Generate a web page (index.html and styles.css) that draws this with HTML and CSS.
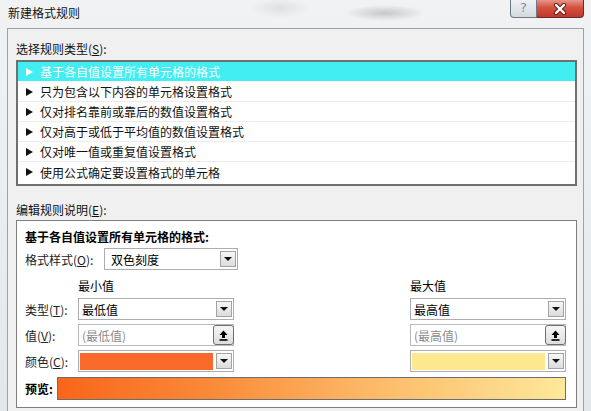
FILE: index.html
```html
<!DOCTYPE html>
<html lang="zh-CN">
  <head>
    <meta charset="UTF-8" />
    <title>新建格式规则</title>
    <link rel="stylesheet" href="styles.css">
  </head>
  <body>
    <div class="window">
      <div class="titlebar">
        <span class="title">新建格式规则</span>
        <div class="caption">
          <div class="btn-help">?</div>
          <div class="btn-close">
            <svg width="14" height="12" viewBox="0 0 14 12">
              <path d="M3 2 L11 10 M11 2 L3 10" stroke="#6b1f16" stroke-width="4.4" stroke-linecap="round" />
              <path d="M3 2 L11 10 M11 2 L3 10" stroke="#ffffff" stroke-width="2.4" stroke-linecap="round" />
            </svg>
          </div>
        </div>
      </div>

      <div class="dialog">
        <div class="section-label">选择规则类型(<u>S</u>):</div>
        <ul class="rule-list">
          <li class="selected"><span class="tri"></span>基于各自值设置所有单元格的格式</li>
          <li><span class="tri"></span>只为包含以下内容的单元格设置格式</li>
          <li><span class="tri"></span>仅对排名靠前或靠后的数值设置格式</li>
          <li><span class="tri"></span>仅对高于或低于平均值的数值设置格式</li>
          <li><span class="tri"></span>仅对唯一值或重复值设置格式</li>
          <li><span class="tri"></span>使用公式确定要设置格式的单元格</li>
        </ul>

        <div class="section-label second">编辑规则说明(<u>E</u>):</div>
        <div class="desc">
          <div class="desc-title">基于各自值设置所有单元格的格式:</div>

          <div class="style-row">
            <span class="style-label">格式样式(<u>O</u>):</span>
            <div class="combo style-combo">
              <span>双色刻度</span>
              <span class="drop-btn"></span>
            </div>
          </div>

          <div class="scale">
            <span class="col-head col-min">最小值</span>
            <span class="col-head col-max">最大值</span>

            <span class="row-label">类型(<u>T</u>):</span>
            <div class="combo col-min">
              <span>最低值</span>
              <span class="drop-btn"></span>
            </div>
            <div class="combo col-max">
              <span>最高值</span>
              <span class="drop-btn"></span>
            </div>

            <span class="row-label">值(<u>V</u>):</span>
            <div class="ref-input col-min">
              <span>(最低值)</span>
              <span class="ref-btn">
                <svg width="9" height="11" viewBox="0 0 9 11">
                  <path d="M4.5 0.5 L8.5 5 L6 5 L6 8 L3 8 L3 5 L0.5 5 Z" fill="#000" />
                  <rect x="0.5" y="9.2" width="8" height="1.6" fill="#000" />
                </svg>
              </span>
            </div>
            <div class="ref-input col-max">
              <span>(最高值)</span>
              <span class="ref-btn">
                <svg width="9" height="11" viewBox="0 0 9 11">
                  <path d="M4.5 0.5 L8.5 5 L6 5 L6 8 L3 8 L3 5 L0.5 5 Z" fill="#000" />
                  <rect x="0.5" y="9.2" width="8" height="1.6" fill="#000" />
                </svg>
              </span>
            </div>

            <span class="row-label">颜色(<u>C</u>):</span>
            <div class="color-combo col-min">
              <span class="swatch swatch-min"></span>
              <span class="drop-btn"></span>
            </div>
            <div class="color-combo col-max">
              <span class="swatch swatch-max"></span>
              <span class="drop-btn"></span>
            </div>
          </div>

          <div class="preview-row">
            <span class="preview-label">预览:</span>
            <div class="preview-bar"></div>
          </div>
        </div>
      </div>
    </div>
  </body>
</html>
```

FILE: styles.css
```css
* {
  margin: 0;
  padding: 0;
  box-sizing: border-box;
}

body {
  width: 591px;
  height: 411px;
  overflow: hidden;
  font-family: "Noto Sans CJK SC", "Microsoft YaHei", sans-serif;
  font-size: 12px;
  color: #000;
}

u {
  text-decoration: underline;
  text-underline-offset: 1px;
}

.window {
  height: 411px;
  display: flex;
  flex-direction: column;
  padding: 0 7px;
  background:
    radial-gradient(ellipse 40px 8px at 385px 13px, rgba(120, 120, 120, 0.35), transparent),
    radial-gradient(ellipse 30px 10px at 280px 8px, rgba(150, 150, 150, 0.2), transparent),
    linear-gradient(to bottom, #f1f2f3, #e4e7ea);
}

.titlebar {
  height: 28px;
  flex-shrink: 0;
  display: flex;
  align-items: flex-start;
}

.title {
  margin: 5px 0 0 1px;
  line-height: 16px;
  color: #111;
}

.caption {
  margin-left: auto;
  display: flex;
}

.btn-help {
  width: 27px;
  height: 18px;
  border: 1px solid #6d7885;
  border-top: none;
  border-bottom-left-radius: 4px;
  background: linear-gradient(to bottom, #eef1f4, #d3d9df);
  color: #7a8694;
  font-family: "DejaVu Sans", sans-serif;
  font-size: 13px;
  line-height: 16px;
  text-align: center;
  text-shadow: 0 0 1px #fff;
}

.btn-close {
  width: 47px;
  height: 18px;
  border: 1px solid #6a2a22;
  border-top: none;
  border-left: none;
  border-bottom-right-radius: 4px;
  background: linear-gradient(to bottom, #e8948a 0%, #d4513f 45%, #c2352a 100%);
  display: flex;
  align-items: center;
  justify-content: center;
}

.dialog {
  flex: 1;
  background: #f0f0f0;
  border: 1px solid #9aa3ac;
  border-bottom: none;
  padding: 12px 6px 0 8px;
}

.section-label {
  line-height: 16px;
  color: #111;
}

.section-label.second {
  margin-top: 16px;
}

.rule-list {
  list-style: none;
  margin-top: 3px;
  height: 126px;
  border: 2px solid #6f6f6f;
  background: #fff;
}

.rule-list li {
  height: 20px;
  display: flex;
  align-items: center;
  padding-left: 8px;
  border-bottom: 1px solid #ececec;
  color: #111;
}

.rule-list li:last-child {
  border-bottom: none;
}

.rule-list li.selected {
  background: #43eef2;
  color: #fff;
  border-bottom-color: #fff;
}

.tri {
  width: 0;
  height: 0;
  border-left: 7px solid #111;
  border-top: 4px solid transparent;
  border-bottom: 4px solid transparent;
  margin-right: 7px;
}

.selected .tri {
  border-left-color: #fff;
}

.desc {
  margin-top: 2px;
  height: 188px;
  border: 1px solid #7f7f7f;
  background: #fff;
  padding: 8px 10px 0 8px;
}

.desc-title {
  font-weight: 700;
  line-height: 16px;
}

.style-row {
  display: flex;
  align-items: center;
  margin-top: 3px;
}

.style-label {
  width: 79px;
  color: #222;
}

.combo {
  height: 22px;
  display: flex;
  align-items: center;
  justify-content: space-between;
  border: 1px solid #abadb3;
  background: #fff;
  padding: 0 1px 0 3px;
}

.style-combo {
  width: 134px;
  padding-left: 6px;
}

.drop-btn {
  width: 16px;
  height: 16px;
  border: 1px solid #a2a2a2;
  background: linear-gradient(to bottom, #f7f7f7, #dcdcdc);
  display: flex;
  align-items: center;
  justify-content: center;
}

.drop-btn::after {
  content: "";
  border-top: 4px solid #111;
  border-left: 4px solid transparent;
  border-right: 4px solid transparent;
}

.scale {
  display: grid;
  grid-template-columns: 53px 156px 1fr 156px;
  grid-template-rows: 17px 22px 22px 22px;
  row-gap: 4px;
  margin-top: 7px;
}

.col-head {
  line-height: 17px;
}

.col-min {
  grid-column: 2;
}

.col-max {
  grid-column: 4;
}

.row-label {
  grid-column: 1;
  display: flex;
  align-items: center;
  color: #222;
}

.ref-input {
  height: 22px;
  display: flex;
  align-items: center;
  justify-content: space-between;
  border: 1px solid #b5b8be;
  background: #fff;
  padding-left: 3px;
  color: #8c8c8c;
}

.ref-btn {
  width: 21px;
  height: 20px;
  margin-right: -1px;
  border: 1px solid #707070;
  border-radius: 3px;
  background: linear-gradient(to bottom, #f6f6f6, #dddddd);
  display: flex;
  align-items: center;
  justify-content: center;
}

.color-combo {
  height: 22px;
  display: flex;
  align-items: center;
  gap: 3px;
  border: 1px solid #abadb3;
  background: #fff;
  padding: 1px;
}

.swatch {
  flex: 1;
  height: 17px;
}

.swatch-min {
  background: #f8692a;
}

.swatch-max {
  background: #fde78f;
}

.preview-row {
  display: flex;
  align-items: center;
  margin-top: 5px;
}

.preview-label {
  width: 32px;
  font-weight: 700;
}

.preview-bar {
  flex: 1;
  height: 23px;
  border: 1px solid #6d6d6d;
  background: linear-gradient(to right, #f8661b 0%, #fa8a38 30%, #fcb765 60%, #fee89a 100%);
}
```
